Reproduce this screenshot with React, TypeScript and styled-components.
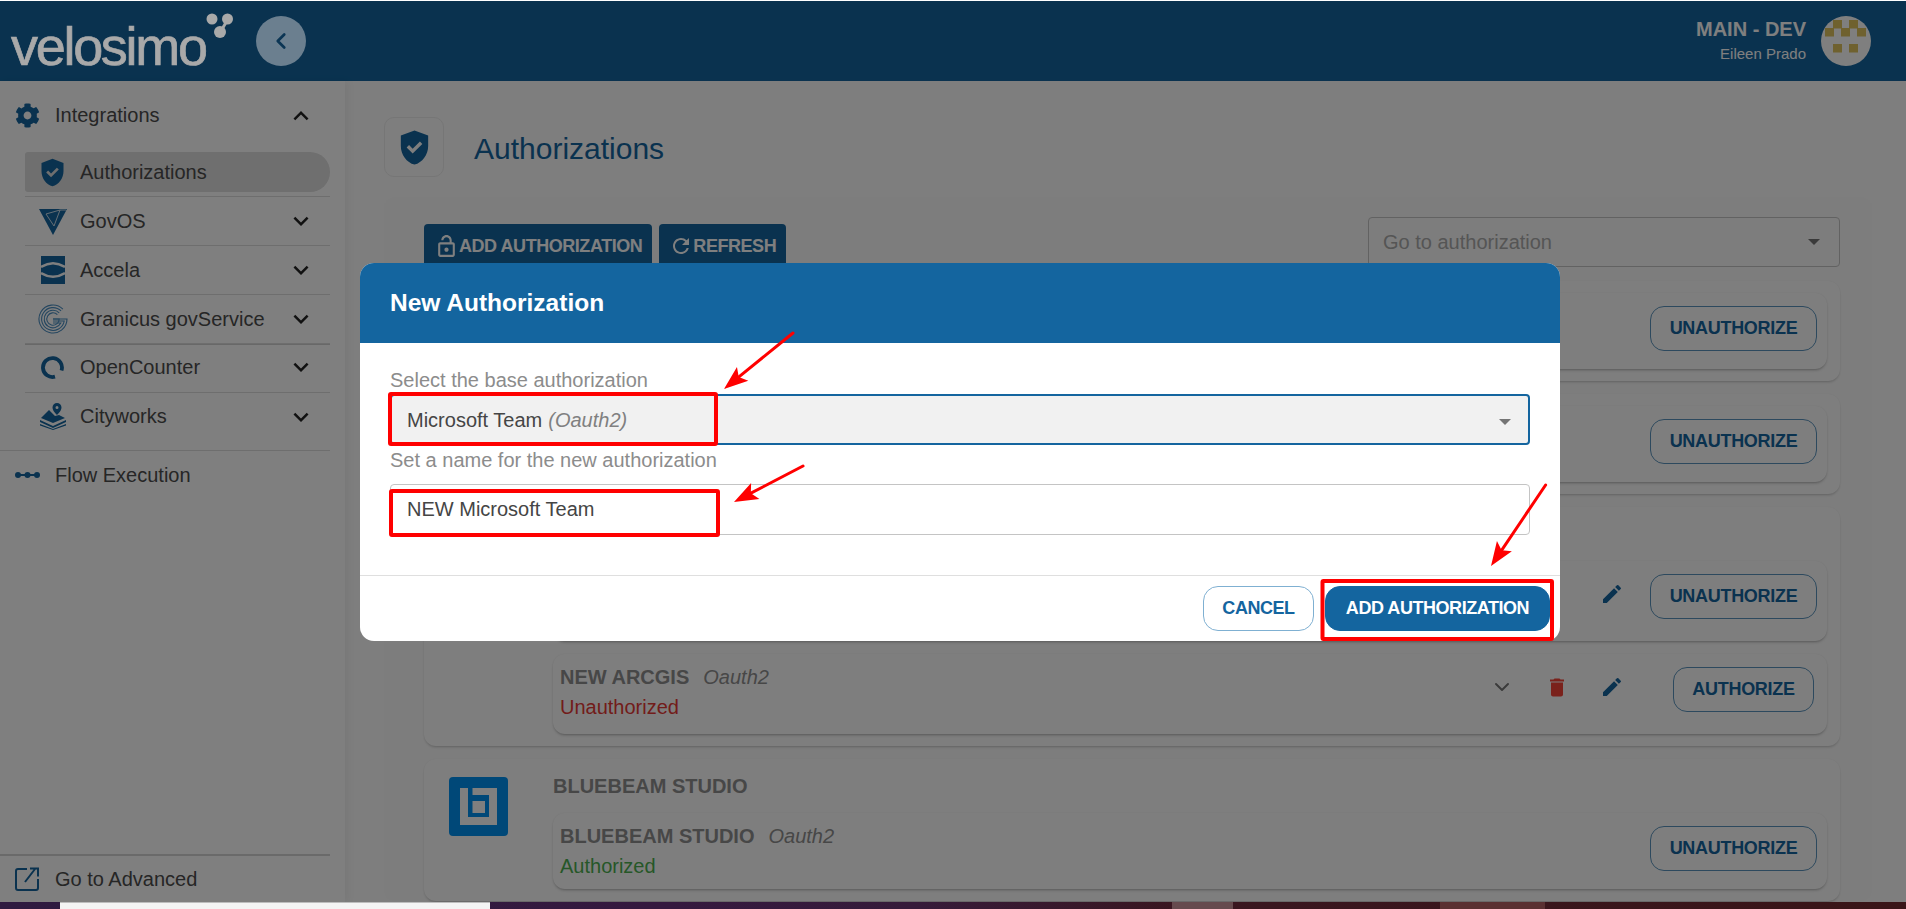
import styled, { createGlobalStyle } from "styled-components";
import { FaCog } from "react-icons/fa";
import { MdDelete, MdEdit, MdExpandLess, MdExpandMore, MdOutlineLockOpen, MdRefresh } from "react-icons/md";
import { LuChevronDown, LuChevronLeft } from "react-icons/lu";

const BLUE = "#14659f";

const GlobalStyle = createGlobalStyle`
  html, body {
    margin: 0;
    padding: 0;
    background: #fff;
    overflow: hidden;
  }
  * { box-sizing: border-box; }
  body {
    font-family: "Liberation Sans", Arial, sans-serif;
    font-size: 20px;
  }
`;

const Page = styled.div`
  height: 909px;
  width: 1906px;
  padding-top: 1px;
  display: flex;
  flex-direction: column;
  position: relative;
  overflow: hidden;
`;

const Window = styled.div`
  position: relative;
  height: 901px;
  display: flex;
  flex-direction: column;
  overflow: hidden;
`;

const TopBar = styled.header`
  height: 80px;
  flex: none;
  background: ${BLUE};
  display: flex;
  align-items: center;
  padding: 0 35px 0 11px;
`;

const Logo = styled.div`
  position: relative;
  z-index: 20;
  width: 245px;
  height: 80px;
  display: flex;
  align-items: flex-start;
`;

const LogoWord = styled.span`
  font-size: 54px;
  line-height: 54px;
  letter-spacing: -2.3px;
  color: #a9a9a9;
  margin-top: 18px;
  -webkit-text-stroke: 0.7px #a9a9a9;
`;

const LogoDots = styled.svg`
  margin: 11px 0 0 0;
`;

const BackButton = styled.button`
  position: relative;
  z-index: 20;
  width: 50px;
  height: 50px;
  border: 0;
  padding: 0;
  border-radius: 50%;
  background: #6b7f8f;
  color: #0b3554;
  display: flex;
  align-items: center;
  justify-content: center;
`;

const UserBox = styled.div`
  margin-left: auto;
  text-align: right;
  color: #fff;
  margin-right: 15px;
`;

const EnvName = styled.div`
  font-size: 20px;
  font-weight: 700;
  line-height: 24px;
  margin-top: -2px;
`;

const UserName = styled.div`
  font-size: 15px;
  line-height: 18px;
  margin-top: 4px;
`;

const Avatar = styled.svg`
  border-radius: 50%;
  background: #fff;
`;

const Body = styled.div`
  flex: 1;
  min-height: 0;
  display: flex;
`;

const Sidebar = styled.aside`
  position: relative;
  width: 345px;
  flex: none;
  padding-right: 15px;
  background: #fff;
  box-shadow: 3px 0 8px rgba(0, 0, 0, 0.05);
  display: flex;
  flex-direction: column;
  color: #4c4c4c;
`;

const NavRow = styled.div`
  height: ${(p) => p.$h || 48}px;
  padding-top: ${(p) => p.$nudge || 0}px;
  display: flex;
  align-items: center;
  padding-left: 15px;
  color: #4c4c4c;
  svg.lead {
    color: ${BLUE};
    flex: none;
  }
`;

const NavLabel = styled.span`
  margin-left: 15px;
  flex: 1;
`;

const Caret = styled.span`
  width: 30px;
  height: 30px;
  margin-right: 14px;
  color: #222;
  display: flex;
`;

const SubList = styled.div`
  margin-left: 25px;
`;

const SubRow = styled.div`
  height: 49px;
  display: flex;
  align-items: center;
  padding-bottom: ${(p) => (p.$raised ? 2 : 0)}px;
  border-bottom: ${(p) => (p.$last ? "0" : "1px solid #dddddd")};
  box-shadow: ${(p) => (p.$thick ? "0 1px 0 #d0d0d0" : "none")};
`;

const SubPill = styled.div`
  flex: 1;
  height: 40px;
  display: flex;
  align-items: center;
  background: ${(p) => (p.$active ? "#dedede" : "transparent")};
  border-radius: 3px 20px 20px 3px;
`;

const SubIcon = styled.span`
  width: 55px;
  flex: none;
  display: flex;
  justify-content: center;
  color: ${BLUE};
`;

const SubLabel = styled.span`
  flex: 1;
`;

const NavDivider = styled.div`
  height: 1px;
  background: #dddddd;
  margin-top: 8px;
`;

const SidebarFoot = styled.div`
  margin-top: auto;
  border-top: 2px solid #d4d4d4;
`;

const Main = styled.main`
  flex: 1;
  min-width: 0;
  background: #fcfcfc;
  padding: 36px 34px 0 39px;
  overflow: hidden;
`;

const PageHead = styled.div`
  display: flex;
  align-items: center;
  height: 60px;
`;

const HeadTile = styled.div`
  width: 60px;
  height: 60px;
  border: 1px solid #ececec;
  border-radius: 10px;
  display: flex;
  align-items: center;
  justify-content: center;
  color: ${BLUE};
  background: #fdfdfd;
`;

const PageTitle = styled.h1`
  margin: 3px 0 0 30px;
  font-size: 30px;
  font-weight: 400;
  color: ${BLUE};
`;

const Panel = styled.section`
  margin-top: 20px;
  padding: 20px 32px 0 40px;
  background: #fbfbfb;
  border-radius: 10px;
`;

const Toolbar = styled.div`
  height: 50px;
  display: flex;
  gap: 7px;
  margin-bottom: 14px;
`;

const ToolButton = styled.button`
  height: 44px;
  margin-top: 7px;
  border: 0;
  border-radius: 4px;
  padding: 0 10px;
  background: ${BLUE};
  color: #fff;
  font: 700 18px "Liberation Sans", Arial, sans-serif;
  letter-spacing: -0.45px;
  display: flex;
  align-items: center;
  white-space: nowrap;
`;

const Picker = styled.div`
  margin-left: auto;
  width: 472px;
  height: 50px;
  border: 1px solid #c4c4c4;
  border-radius: 4px;
  padding: 0 15px 0 14px;
  display: flex;
  align-items: center;
  justify-content: space-between;
  color: #aaaaaa;
`;

const Triangle = styled.span`
  width: 0;
  height: 0;
  border-left: 6px solid transparent;
  border-right: 6px solid transparent;
  border-top: 6px solid ${(p) => p.$color || "#757575"};
  margin: ${(p) => p.$top || 0}px ${(p) => p.$right || 4}px 0 0;
`;

const CardList = styled.div`
  display: flex;
  flex-direction: column;
  gap: 13px;
`;

const Card = styled.article`
  display: flex;
  background: #fcfcfc;
  border-radius: 12px;
  padding: ${(p) => (p.$titled ? "0 13px 12px 0" : "12px 13px 12px 0")};
  box-shadow: 0 2px 3px -1px rgba(0, 0, 0, 0.22), 0 0 2px rgba(0, 0, 0, 0.05);
`;

const LogoColumn = styled.div`
  width: 129px;
  flex: none;
  padding: 18px 0 0 25px;
`;

const CardBody = styled.div`
  flex: 1;
  min-width: 0;
  display: flex;
  flex-direction: column;
  gap: 13px;
`;

const CardTitle = styled.div`
  height: 41px;
  padding-top: 16px;
  font-weight: 700;
  line-height: 23px;
  color: #8e8e8e;
`;

const Item = styled.div`
  height: ${(p) => (p.$tall ? 80 : 76)}px;
  display: flex;
  justify-content: space-between;
  background: #fdfdfd;
  border-radius: 12px;
  padding: 8px 10px 0 7px;
  box-shadow: 0 2px 3px -1px rgba(0, 0, 0, 0.3), 0 0 2px rgba(0, 0, 0, 0.06);
`;

const ItemText = styled.div`
  line-height: 30px;
`;

const ItemName = styled.span`
  font-weight: 700;
  color: #8e8e8e;
`;

const ItemKind = styled.span`
  font-style: italic;
  color: #8e8e8e;
  margin-left: 14px;
`;

const ItemStatus = styled.div`
  color: ${(p) => (p.$ok ? "#4caf50" : "#e53935")};
`;

const ItemActions = styled.div`
  display: flex;
  align-items: flex-start;
`;

const IconSlot = styled.span`
  width: 24px;
  height: 24px;
  margin: 13px 31px 0 0;
  display: flex;
  align-items: center;
  justify-content: center;
  flex: none;
  color: ${(p) => p.$color || BLUE};
  &:last-of-type {
    margin-right: 26px;
  }
`;

const ButtonSlot = styled.div`
  width: 167px;
  display: flex;
  justify-content: flex-end;
  padding-top: 5px;
`;

const OutlineButton = styled.button`
  height: 45px;
  border: 1px solid #5b93bc;
  border-radius: 14px;
  background: transparent;
  color: ${BLUE};
  font: 700 18px "Liberation Sans", Arial, sans-serif;
  letter-spacing: -0.3px;
  padding: 0;
  width: ${(p) => p.$w}px;
  margin-right: ${(p) => p.$inset || 0}px;
`;

const Strip = styled.div`
  height: 7px;
  flex: none;
  position: relative;
  background: linear-gradient(90deg, #2f1a40 0%, #35193f 35%, #361b3a 48%, #3a1620 62%, #3a1518 100%);
`;

const StripBlock = styled.span`
  position: absolute;
  top: 0;
  bottom: 0;
  left: ${(p) => p.$x}px;
  width: ${(p) => p.$w}px;
  background: ${(p) => p.$color};
  border-top: ${(p) => (p.$edge ? "1px solid #bdbdbd" : "0")};
`;

const Scrim = styled.div`
  position: absolute;
  inset: 0;
  z-index: 10;
  background: rgba(0, 0, 0, 0.5);
  display: flex;
  justify-content: center;
  align-items: flex-start;
  padding: 262px 0 0 14px;
`;

const Modal = styled.div`
  width: 1200px;
  height: 378px;
  background: #fff;
  border-radius: 14px;
  overflow: hidden;
  display: flex;
  flex-direction: column;
`;

const ModalHead = styled.div`
  height: 80px;
  flex: none;
  background: ${BLUE};
  color: #fff;
  display: flex;
  align-items: center;
  padding-left: 30px;
  font-size: 24.5px;
  font-weight: 700;
`;

const ModalBody = styled.div`
  flex: 1;
  padding: 22px 30px 0;
`;

const FieldLabel = styled.div`
  height: 29px;
  line-height: 30px;
  color: #8c8c8c;
`;

const NameLabel = styled(FieldLabel)`
  height: 39px;
`;

const SelectBox = styled.div`
  height: 51px;
  border: 2px solid ${BLUE};
  border-radius: 4px;
  background: #f1f1f1;
  padding: 1px 15px 0 15px;
  display: flex;
  align-items: center;
  justify-content: space-between;
  color: #454545;
`;

const Muted = styled.i`
  color: #808080;
  margin-left: 6px;
`;

const NameInput = styled.input`
  display: block;
  width: 100%;
  height: 51px;
  border: 1px solid #c4c4c4;
  border-radius: 4px;
  padding: 0 16px;
  font: 400 20px "Liberation Sans", Arial, sans-serif;
  color: #454545;
  outline: 0;
`;

const ModalFoot = styled.div`
  height: 66px;
  flex: none;
  border-top: 1px solid #dfdfdf;
  display: flex;
  align-items: flex-start;
  justify-content: flex-end;
  gap: 11px;
  padding: 10px 10px 0 0;
`;

const FootButton = styled.button`
  height: 45px;
  width: ${(p) => p.$w}px;
  border-radius: 15px;
  border: 1px solid ${(p) => (p.$primary ? BLUE : "#7fb0d2")};
  background: ${(p) => (p.$primary ? BLUE : "#fff")};
  color: ${(p) => (p.$primary ? "#fff" : BLUE)};
  font: 700 18px "Liberation Sans", Arial, sans-serif;
  letter-spacing: -0.45px;
  padding: 0;
`;

const Marks = styled.svg`
  position: absolute;
  left: 0;
  top: 0;
  z-index: 30;
  pointer-events: none;
`;

function ShieldCheck({ size }) {
  return (
    <svg className="lead" width={size} height={size} viewBox="0 0 24 24" fill="currentColor">
      <path d="M12 2 4 5v6.09c0 5.05 3.41 9.76 8 10.91 4.59-1.15 8-5.86 8-10.91V5l-8-3zm-1.06 13.54L7.4 12l1.41-1.41 2.12 2.12 4.24-4.24 1.41 1.41-5.64 5.66z" />
    </svg>
  );
}

function GovOsIcon() {
  return (
    <svg width="28" height="27" viewBox="0 0 28 27">
      <path d="M0 1h28L14 27z" fill={BLUE} />
      <path d="M7 6 21 2 15 18z" fill="none" stroke="#dfe8ef" strokeWidth="0.9" />
      <path d="M21 2l6 0" fill="none" stroke="#dfe8ef" strokeWidth="0.9" />
    </svg>
  );
}

function AccelaIcon() {
  return (
    <svg width="24" height="28" viewBox="0 0 24 28">
      <rect width="24" height="28" fill={BLUE} />
      <path d="M0 11C8 6 16 6 24 11" fill="none" stroke="#fff" strokeWidth="2.600" />
      <path d="M0 17C8 22 16 22 24 17" fill="none" stroke="#fff" strokeWidth="2.600" />
    </svg>
  );
}

const granicusRings = [
  { r: 14, bar: 15 },
  { r: 11.4, bar: 17 },
  { r: 8.8, bar: 19 },
  { r: 6.2, bar: 15 },
];

function GranicusIcon() {
  return (
    <svg width="30" height="30" viewBox="0 0 30 30" fill="none" stroke="#4a8dc0" strokeWidth="1.100">
      {granicusRings.map(({ r, bar }) => {
        const gap = r * Math.SQRT1_2;
        const endX = 15 + Math.sqrt(r * r - (bar - 15) * (bar - 15));
        return (
          <path
            key={r}
            d={`M${15 + gap} ${15 - gap}A${r} ${r} 0 1 0 ${endX} ${bar}H15`}
          />
        );
      })}
    </svg>
  );
}

function OpenCounterIcon() {
  return (
    <svg width="23" height="25" viewBox="0 0 23 25" fill="none">
      <path d="M14 21.700A9.500 9.500 0 1 1 20.500 15.500" stroke={BLUE} strokeWidth="3.800" />
    </svg>
  );
}

function CityworksIcon() {
  return (
    <svg width="26" height="27" viewBox="0 0 26 27" fill={BLUE}>
      <path d="M17 0a4.500 4.500 0 0 1 4.500 4.500C21.500 8 17 12 17 12s-4.500-4-4.500-7.500A4.500 4.500 0 0 1 17 0zm0 3a1.500 1.500 0 1 0 0 3 1.500 1.500 0 0 0 0-3z" fillRule="evenodd" />
      <path d="M9 7 15 13l4-1 6 3-12 5L1 15z" />
      <path d="M0 17l13 6 13-6v2l-13 6-13-6z" />
      <path d="M0 21l13 5 13-5v1.500L13 27 0 22.500z" />
    </svg>
  );
}

function FlowIcon() {
  return (
    <svg className="lead" width="25" height="8" viewBox="0 0 25 8" fill="currentColor">
      <rect x="3" y="3" width="19" height="2" />
      <circle cx="3" cy="4" r="3" />
      <circle cx="12.500" cy="4" r="3" />
      <circle cx="22" cy="4" r="3" />
    </svg>
  );
}

function AdvancedIcon() {
  return (
    <svg className="lead" width="25" height="24" viewBox="0 0 25 24" fill="none" stroke="currentColor" strokeWidth="2">
      <path d="M12 2H3a2 2 0 0 0-2 2v17a2 2 0 0 0 2 2h18a2 2 0 0 0 2-2V12" />
      <path d="M10 15 20 2M15 1.500h8v8" />
    </svg>
  );
}

function BluebeamLogo() {
  return (
    <svg width="59" height="59" viewBox="0 0 59 59">
      <rect width="59" height="59" rx="4" fill="#0090f0" />
      <path d="M11 11h8v29h21V18H23.500v-7H48v37H11z" fill="#fff" />
      <rect x="23.500" y="24" width="12.500" height="12" fill="#fff" />
    </svg>
  );
}

const avatarCells = [
  [8, 4], [24, 4],
  [0, 12], [16, 12], [32, 12],
  [8, 28], [24, 28],
];

const subItems = [
  { label: "GovOS", icon: <GovOsIcon /> },
  { label: "Accela", icon: <AccelaIcon /> },
  { label: "Granicus govService", icon: <GranicusIcon />, thick: true },
  { label: "OpenCounter", icon: <OpenCounterIcon />, raised: true },
  { label: "Cityworks", icon: <CityworksIcon />, raised: true, last: true },
];

const Arrow = ({ x1, y1, x2, y2 }) => {
  const len = Math.hypot(x2 - x1, y2 - y1);
  const ux = (x2 - x1) / len;
  const uy = (y2 - y1) / len;
  const bx = x2 - ux * 24;
  const by = y2 - uy * 24;
  const nx = -uy;
  const ny = ux;
  const head = [
    `${x2},${y2}`,
    `${bx + nx * 9},${by + ny * 9}`,
    `${bx + ux * 5},${by + uy * 5}`,
    `${bx - nx * 9},${by - ny * 9}`,
  ].join(" ");
  return (
    <g>
      <line x1={x1} y1={y1} x2={bx + ux * 6} y2={by + uy * 6} stroke="#f00" strokeWidth="3" strokeLinecap="round" />
      <polygon points={head} fill="#f00" />
    </g>
  );
};

export default function App() {
  return (
    <>
      <GlobalStyle />
      <Page>
        <Window>
          <TopBar>
            <Logo>
              <LogoWord>velosimo</LogoWord>
              <LogoDots width="30" height="30" viewBox="0 0 30 30" fill="#a9a9a9">
                <path d="M15 19 22 7" stroke="#a9a9a9" strokeWidth="3" />
                <circle cx="6" cy="7" r="5.500" />
                <circle cx="21.500" cy="7" r="5.500" />
                <circle cx="14" cy="20" r="6" />
              </LogoDots>
            </Logo>
            <BackButton aria-label="Collapse">
              <LuChevronLeft size={26} strokeWidth={2.5} />
            </BackButton>
            <UserBox>
              <EnvName>MAIN - DEV</EnvName>
              <UserName>Eileen Prado</UserName>
            </UserBox>
            <Avatar width="50" height="50" viewBox="0 0 50 50">
              <g fill="#dec25f" transform="translate(4 0)">
                {avatarCells.map(([x, y]) => (
                  <rect key={`${x}-${y}`} x={x} y={y} width="9" height="8.500" />
                ))}
              </g>
            </Avatar>
          </TopBar>
          <Body>
            <Sidebar>
              <NavRow $h={67} $nudge={2}>
                <FaCog className="lead" size={25} />
                <NavLabel>Integrations</NavLabel>
                <Caret>
                  <MdExpandLess size={30} />
                </Caret>
              </NavRow>
              <SubList>
                <SubRow>
                  <SubPill $active>
                    <SubIcon>
                      <ShieldCheck size={33} />
                    </SubIcon>
                    <SubLabel>Authorizations</SubLabel>
                  </SubPill>
                </SubRow>
                {subItems.map((item) => (
                  <SubRow key={item.label} $thick={item.thick} $last={item.last} $raised={item.raised}>
                    <SubIcon>{item.icon}</SubIcon>
                    <SubLabel>{item.label}</SubLabel>
                    <Caret>
                      <MdExpandMore size={30} />
                    </Caret>
                  </SubRow>
                ))}
              </SubList>
              <NavDivider />
              <NavRow>
                <FlowIcon />
                <NavLabel>Flow Execution</NavLabel>
              </NavRow>
              <SidebarFoot>
                <NavRow $h={46}>
                  <AdvancedIcon />
                  <NavLabel>Go to Advanced</NavLabel>
                </NavRow>
              </SidebarFoot>
            </Sidebar>
            <Main>
              <PageHead>
                <HeadTile>
                  <ShieldCheck size={41} />
                </HeadTile>
                <PageTitle>Authorizations</PageTitle>
              </PageHead>
              <Panel>
                <Toolbar>
                  <ToolButton>
                    <MdOutlineLockOpen size={25} />
                    ADD AUTHORIZATION
                  </ToolButton>
                  <ToolButton>
                    <MdRefresh size={24} />
                    REFRESH
                  </ToolButton>
                  <Picker>
                    Go to authorization
                    <Triangle />
                  </Picker>
                </Toolbar>
                <CardList>
                  <Card>
                    <LogoColumn />
                    <CardBody>
                      <Item>
                        <ItemText />
                        <ItemActions>
                          <ButtonSlot>
                            <OutlineButton $w={167}>UNAUTHORIZE</OutlineButton>
                          </ButtonSlot>
                        </ItemActions>
                      </Item>
                    </CardBody>
                  </Card>
                  <Card>
                    <LogoColumn />
                    <CardBody>
                      <Item>
                        <ItemText />
                        <ItemActions>
                          <ButtonSlot>
                            <OutlineButton $w={167}>UNAUTHORIZE</OutlineButton>
                          </ButtonSlot>
                        </ItemActions>
                      </Item>
                    </CardBody>
                  </Card>
                  <Card $titled>
                    <LogoColumn />
                    <CardBody>
                      <CardTitle />
                      <Item $tall>
                        <ItemText />
                        <ItemActions>
                          <IconSlot>
                            <MdEdit size={26} />
                          </IconSlot>
                          <ButtonSlot>
                            <OutlineButton $w={167}>UNAUTHORIZE</OutlineButton>
                          </ButtonSlot>
                        </ItemActions>
                      </Item>
                      <Item $tall>
                        <ItemText>
                          <ItemName>NEW ARCGIS</ItemName>
                          <ItemKind>Oauth2</ItemKind>
                          <ItemStatus>Unauthorized</ItemStatus>
                        </ItemText>
                        <ItemActions>
                          <IconSlot $color="#777">
                            <LuChevronDown size={24} />
                          </IconSlot>
                          <IconSlot $color="#f44336">
                            <MdDelete size={27} />
                          </IconSlot>
                          <IconSlot>
                            <MdEdit size={26} />
                          </IconSlot>
                          <ButtonSlot>
                            <OutlineButton $w={141} $inset={3}>AUTHORIZE</OutlineButton>
                          </ButtonSlot>
                        </ItemActions>
                      </Item>
                    </CardBody>
                  </Card>
                  <Card $titled>
                    <LogoColumn>
                      <BluebeamLogo />
                    </LogoColumn>
                    <CardBody>
                      <CardTitle>BLUEBEAM STUDIO</CardTitle>
                      <Item>
                        <ItemText>
                          <ItemName>BLUEBEAM STUDIO</ItemName>
                          <ItemKind>Oauth2</ItemKind>
                          <ItemStatus $ok>Authorized</ItemStatus>
                        </ItemText>
                        <ItemActions>
                          <ButtonSlot>
                            <OutlineButton $w={167}>UNAUTHORIZE</OutlineButton>
                          </ButtonSlot>
                        </ItemActions>
                      </Item>
                    </CardBody>
                  </Card>
                </CardList>
              </Panel>
            </Main>
          </Body>
          <Scrim>
            <Modal>
              <ModalHead>New Authorization</ModalHead>
              <ModalBody>
                <FieldLabel>Select the base authorization</FieldLabel>
                <SelectBox>
                  <span>
                    Microsoft Team<Muted>(Oauth2)</Muted>
                  </span>
                  <Triangle $right={2} $top={3} />
                </SelectBox>
                <NameLabel>Set a name for the new authorization</NameLabel>
                <NameInput value="NEW Microsoft Team" readOnly />
              </ModalBody>
              <ModalFoot>
                <FootButton $w={111}>CANCEL</FootButton>
                <FootButton $w={225} $primary>ADD AUTHORIZATION</FootButton>
              </ModalFoot>
            </Modal>
          </Scrim>
        </Window>
        <Strip>
          <StripBlock $x={60} $w={430} $color="#f4f4f4" $edge />
          <StripBlock $x={1172} $w={61} $color="#664a4e" />
          <StripBlock $x={1440} $w={105} $color="#5a3032" />
        </Strip>
        <Marks width="1906" height="909" viewBox="0 0 1906 909" fill="none">
          <rect x="390" y="394" width="326" height="50" stroke="#f00" strokeWidth="4" rx="1" />
          <rect x="391" y="491" width="327" height="44" stroke="#f00" strokeWidth="4" rx="1" />
          <rect x="1322.500" y="581" width="229.500" height="58" stroke="#f00" strokeWidth="4" rx="1" />
          <Arrow x1={793} y1={333} x2={724} y2={389} />
          <Arrow x1={803} y1={466} x2={734} y2={502} />
          <Arrow x1={1545.600} y1={485} x2={1491} y2={566} />
        </Marks>
      </Page>
    </>
  );
}
